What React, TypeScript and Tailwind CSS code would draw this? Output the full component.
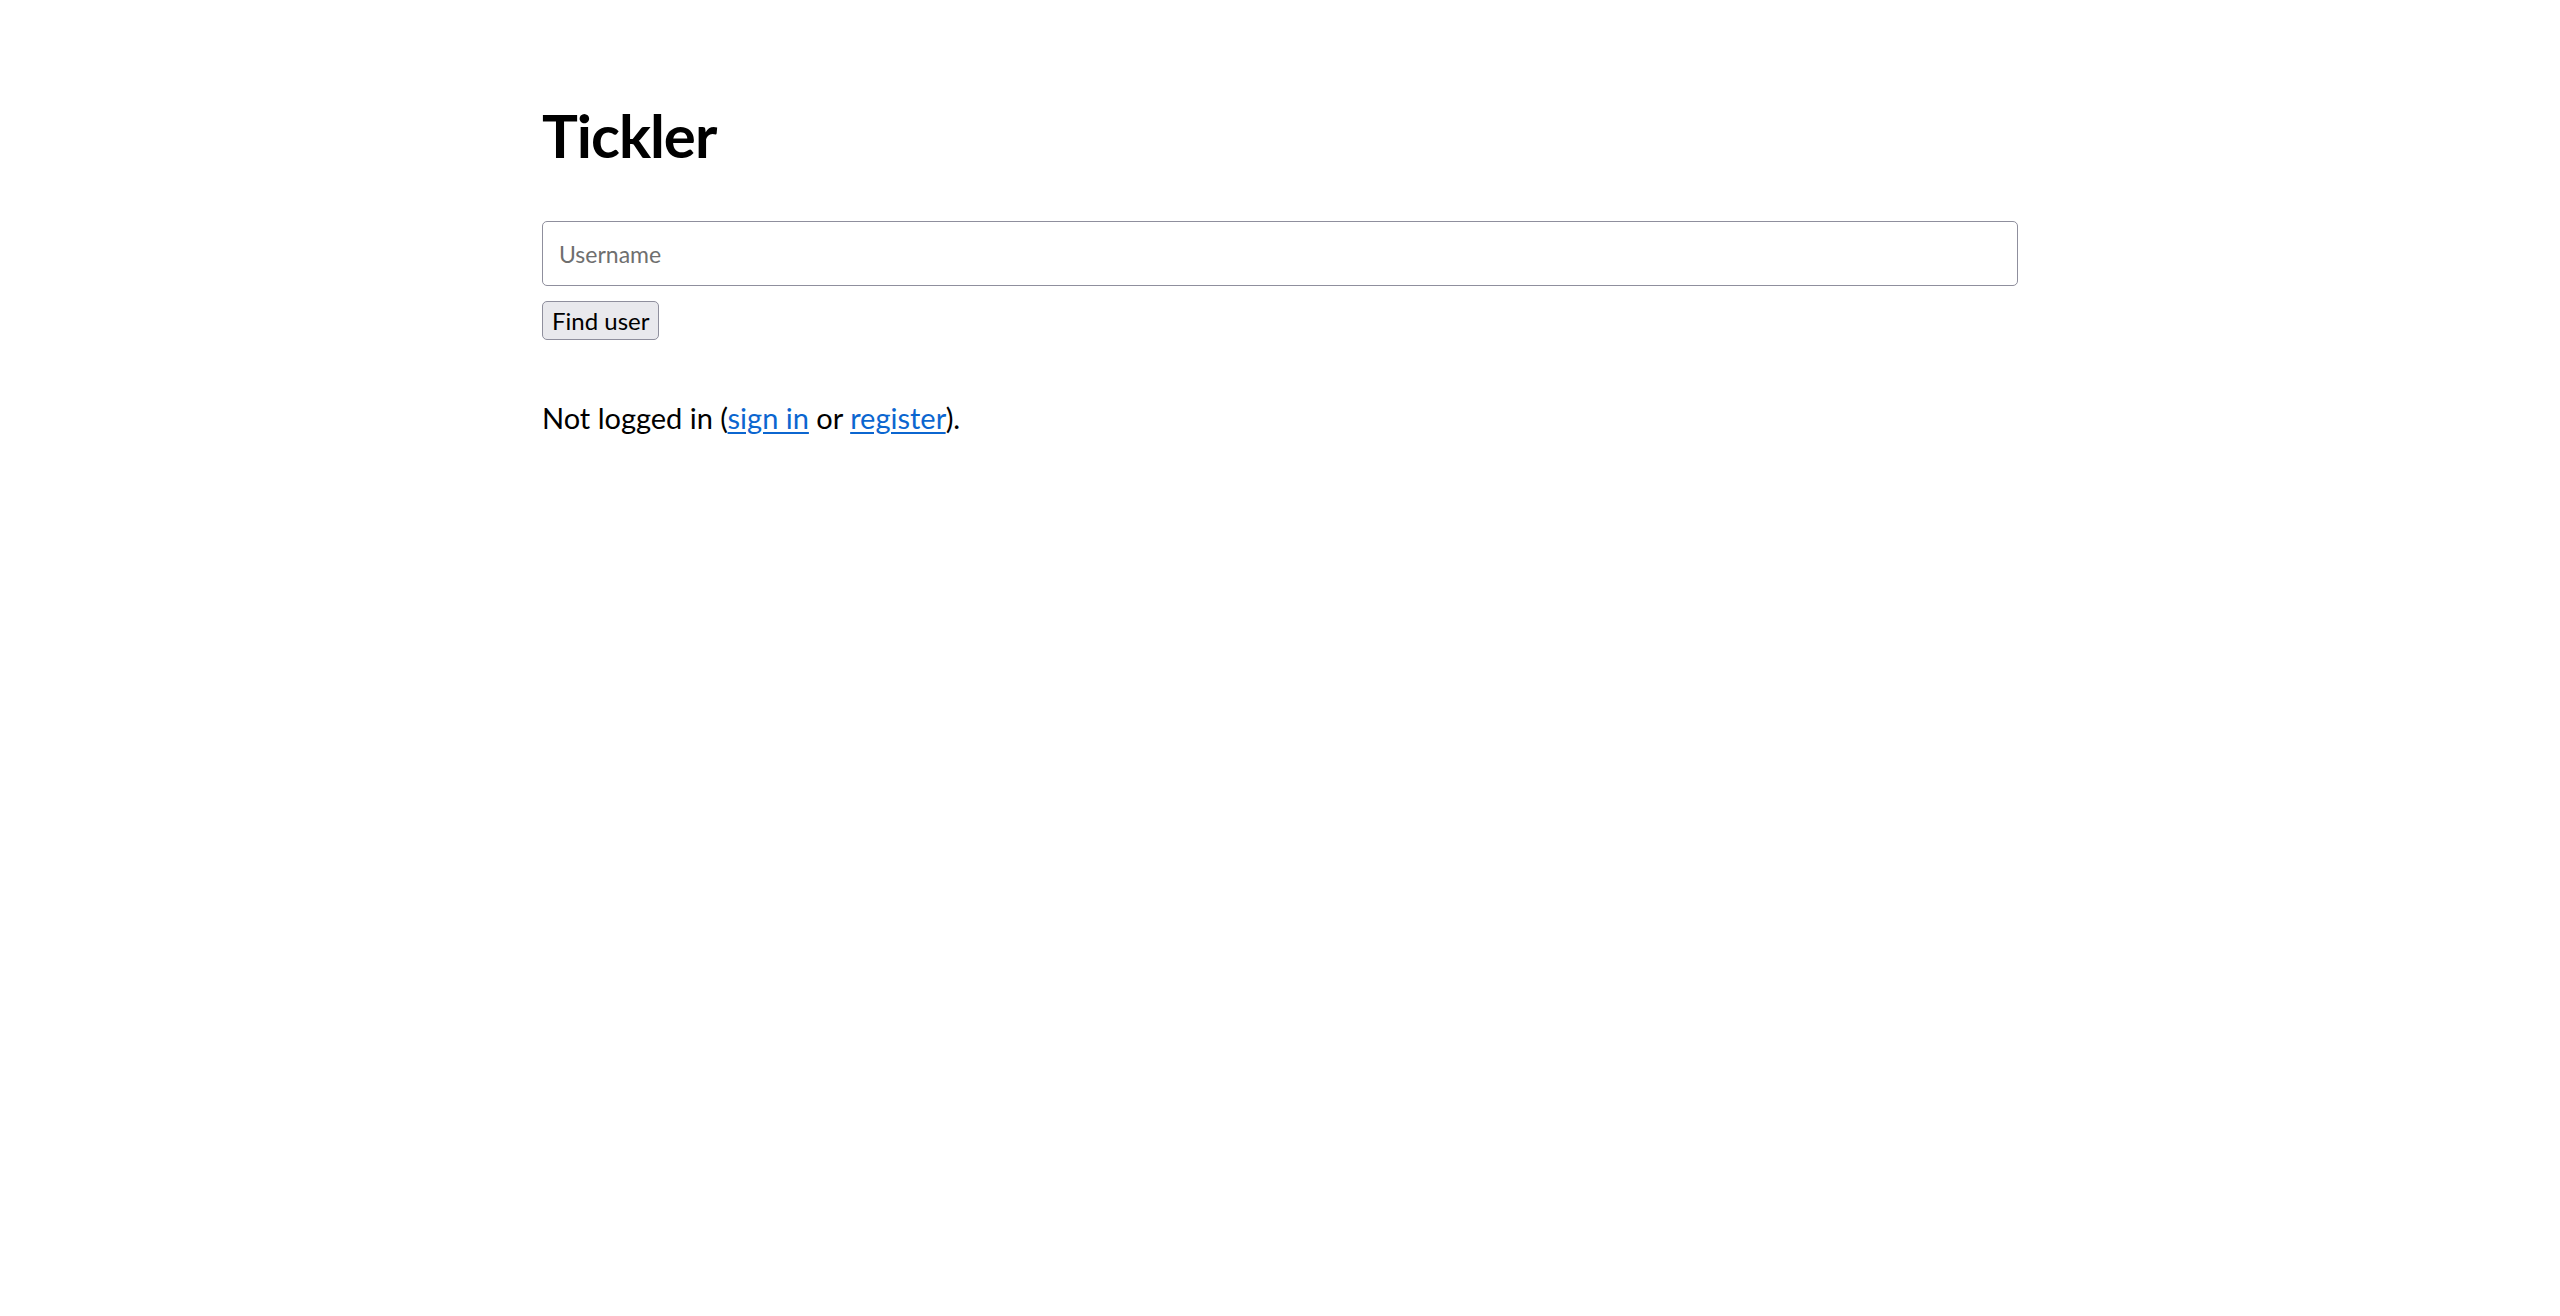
import React from "react";

export default function App() {
  return (
    <div className="min-h-[1316px] bg-white text-black" style={{ fontFamily: 'Lato, "Noto Sans", sans-serif' }}>
      <div className="mx-auto w-[1476px] pt-[99px]">
        <h1 className="text-[60px] leading-[72px] font-bold tracking-[-1px]">Tickler</h1>
        <form className="mt-[50px]" onSubmit={(e) => e.preventDefault()}>
          <input
            type="text"
            placeholder="Username"
            className="block w-full h-[65px] rounded-[5px] border border-[#8f8f9d] px-[16px] text-[23px] placeholder:text-[#6f6f6f] outline-none"
          />
          <button
            type="submit"
            className="mt-[15px] h-[39px] px-[9px] rounded-[5px] border border-[#8f8f9d] bg-[#e9e9ed] text-[24px] leading-none"
          >
            Find user
          </button>
        </form>
        <p className="mt-[58px] text-[29px] leading-[40px]">
          Not logged in (<a href="#" className="text-[#0b66d0] underline underline-offset-[3px]">sign in</a> or{" "}
          <a href="#" className="text-[#0b66d0] underline underline-offset-[3px]">register</a>).
        </p>
      </div>
    </div>
  );
}
